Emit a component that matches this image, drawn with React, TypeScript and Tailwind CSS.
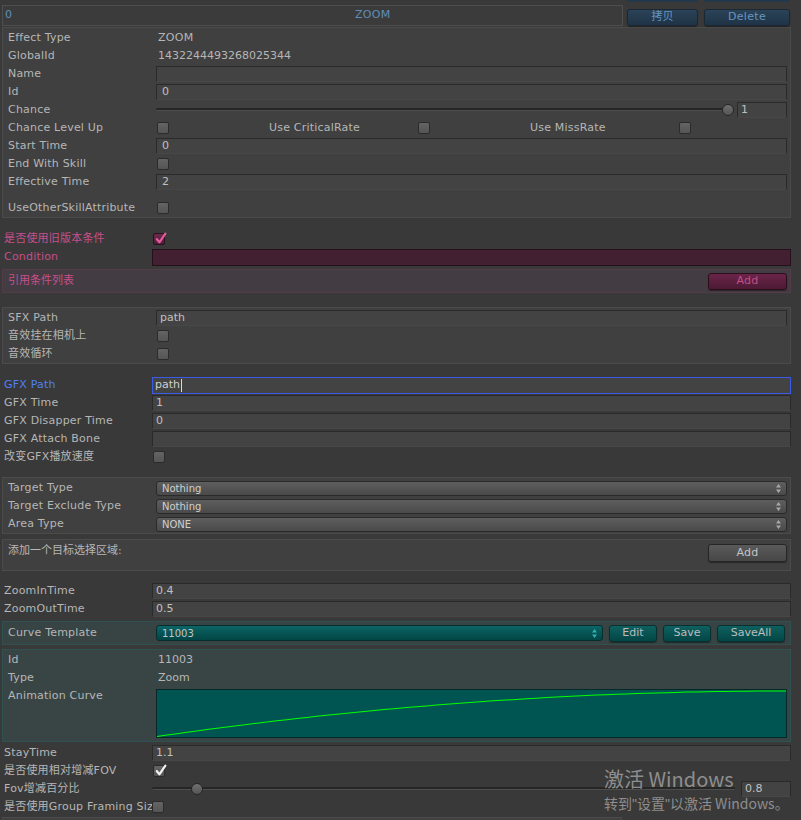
import React from "react"

type Kids = { children?: React.ReactNode }

function Check({ checked, tone = "gray" }: { checked?: boolean; tone?: "gray" | "pink" }) {
  const box =
    tone === "pink"
      ? "bg-linear-to-b from-[#6a2c4a] to-[#4f1f37] border-[#2a1020]"
      : "bg-linear-to-b from-[#646464] to-[#555555] border-[#2b2b2b]"
  return (
    <div className={`relative h-[12px] w-[12px] shrink-0 rounded-[2px] border ${box}`}>
      {checked && (
        <svg viewBox="0 0 12 12" className="absolute left-[0px] top-[-2px] h-[13px] w-[13px]">
          <path
            d="M2.5 6.5 L5 9.5 L10.5 1.5"
            fill="none"
            stroke={tone === "pink" ? "#e45c9e" : "#f2f2f2"}
            strokeWidth="2"
            strokeLinecap="round"
            strokeLinejoin="round"
          />
        </svg>
      )}
    </div>
  )
}

function Field({ value, pad = "pl-[3px]", extra = "" }: { value?: string; pad?: string; extra?: string }) {
  return (
    <div
      className={`h-[16px] min-w-0 flex-1 border border-[#2a2a2a] border-b-[#474747] bg-[#434343] leading-[14px] text-[#c0c0c0] ${pad} ${extra}`}
    >
      {value}
    </div>
  )
}

function Row({ label, inset, labelClass = "", children }: { label: string; inset?: boolean; labelClass?: string } & Kids) {
  return (
    <div className="flex h-[18px] items-center">
      <div
        className={`${inset ? "w-[153px] pl-[5px]" : "w-[152px] pl-[4px]"} shrink-0 overflow-hidden whitespace-nowrap tracking-[0.2px] ${labelClass}`}
      >
        {label}
      </div>
      <div className="flex min-w-0 flex-1 items-center">{children}</div>
    </div>
  )
}

function Arrows({ color = "#a8a8a8" }: { color?: string }) {
  return (
    <svg viewBox="0 0 5 9" className="h-[9px] w-[5px] shrink-0">
      <path d="M2.5 0 L5 3.5 L0 3.5 Z M0 5.5 L5 5.5 L2.5 9 Z" fill={color} />
    </svg>
  )
}

function Dropdown({ value }: { value: string }) {
  return (
    <div className="flex h-[15px] flex-1 items-center justify-between rounded-[3px] border border-[#2a2a2a] bg-linear-to-b from-[#5e5e5e] to-[#4a4a4a] pl-[5px] pr-[5px] text-[10px] text-[#d0d0d0]">
      <span className="leading-[13px]">{value}</span>
      <Arrows />
    </div>
  )
}

function Slider({ thumb }: { thumb: string }) {
  return (
    <div className="relative h-[18px] min-w-0 flex-1">
      <div className="absolute left-0 right-0 top-[7px] h-[3px] rounded-full border-b border-[#4e4e4e] bg-[#262626]" />
      <div
        className={`absolute top-[3px] h-[12px] w-[12px] rounded-full border border-[#262626] bg-linear-to-b from-[#707070] to-[#555555] ${thumb}`}
      />
    </div>
  )
}

function TealBtn({ label, w }: { label: string; w: string }) {
  return (
    <div
      className={`flex h-[17px] ${w} shrink-0 items-center justify-center rounded-[3px] border border-[#073030] bg-linear-to-b from-[#0f6060] to-[#044646] text-[#bcbcbc] shadow-[0_1px_1px_rgba(0,0,0,0.4)]`}
    >
      {label}
    </div>
  )
}

// ease-out curve drawn in the teal area
const curvePts = Array.from({ length: 64 }, (_, i) => {
  const t = i / 63
  const x = t * 628
  const y = 46.5 - 45.5 * (1 - (1 - t) * (1 - t))
  return `${x.toFixed(1)},${y.toFixed(1)}`
}).join(" ")

export default function App() {
  return (
    <div className="relative h-[820px] w-[801px] overflow-hidden bg-[#393939] font-['DejaVu_Sans','Noto_Sans_CJK_SC',sans-serif] text-[11px] text-[#b6b6b6]">
      {/* bottoms of the button row above */}
      <div className="flex h-[4px]">
        <div className="ml-[627px] h-[2px] w-[71px] rounded-b-[2px] bg-[#23384a]" />
        <div className="ml-[6px] h-[2px] w-[86px] rounded-b-[2px] bg-[#23384a]" />
      </div>

      {/* header */}
      <div className="mt-[1px] flex h-[21px] items-end">
        <div className="ml-[2px] flex h-[21px] w-[621px] items-center border border-[#4e4e4e] bg-[#3b3b3b] pl-[2px] text-[#5f8fb9]">
          <span>0</span>
          <span className="ml-[343px] tracking-[0.3px]">ZOOM</span>
        </div>
        <div className="ml-[4px] flex h-[17px] w-[71px] items-center justify-center rounded-[3px] border border-[#1a2835] bg-linear-to-b from-[#2b4358] to-[#1f3345] text-[#6595c2] shadow-[0_1px_1px_rgba(0,0,0,0.4)]">
          拷贝
        </div>
        <div className="ml-[6px] flex h-[17px] w-[86px] items-center justify-center rounded-[3px] border border-[#1a2835] bg-linear-to-b from-[#2b4358] to-[#1f3345] tracking-[0.3px] text-[#6595c2] shadow-[0_1px_1px_rgba(0,0,0,0.4)]">
          Delete
        </div>
      </div>

      {/* main box */}
      <div className="ml-[2px] mt-[1px] w-[789px] border border-[#4b4b4b] bg-[#404040] pr-[3px] pt-[1px]">
        <Row inset label="Effect Type">
          <span className="pl-[2px] tracking-[0.3px]">ZOOM</span>
        </Row>
        <Row inset label="GlobalId">
          <span className="pl-[2px]">1432244493268025344</span>
        </Row>
        <Row inset label="Name">
          <Field pad="pl-[5px]" />
        </Row>
        <Row inset label="Id">
          <Field pad="pl-[5px]" value="0" />
        </Row>
        <Row inset label="Chance">
          <Slider thumb="left-[566px]" />
          <div className="ml-[4px] flex w-[50px]">
            <Field pad="pl-[3px]" value="1" />
          </div>
        </Row>
        <Row inset label="Chance Level Up">
          <div className="w-[113px] pl-[1px]">
            <Check />
          </div>
          <div className="w-[149px] tracking-[0.2px]">Use CriticalRate</div>
          <div className="w-[112px]">
            <Check />
          </div>
          <div className="w-[149px] tracking-[0.2px]">Use MissRate</div>
          <Check />
        </Row>
        <Row inset label="Start Time">
          <Field pad="pl-[5px]" value="0" />
        </Row>
        <Row inset label="End With Skill">
          <div className="pl-[1px]">
            <Check />
          </div>
        </Row>
        <Row inset label="Effective Time">
          <Field pad="pl-[5px]" value="2" />
        </Row>
        <div className="mt-[8px]">
          <Row inset label="UseOtherSkillAttribute">
            <div className="pl-[1px]">
              <Check />
            </div>
          </Row>
        </div>
      </div>

      {/* condition */}
      <div className="mt-[12px] pr-[10px] text-[#c64f8b]">
        <Row label="是否使用旧版本条件">
          <div className="pl-[1px]">
            <Check checked tone="pink" />
          </div>
        </Row>
        <Row label="Condition">
          <div className="h-[17px] flex-1 border border-[#26101b] bg-[#421f31]" />
        </Row>
      </div>
      <div className="ml-[2px] mt-[3px] flex h-[24px] w-[789px] items-center justify-between border border-[#513c48] bg-[#433c42] pl-[5px] pr-[3px] text-[#c64f8b]">
        <span>引用条件列表</span>
        <div className="flex h-[17px] w-[79px] items-center justify-center rounded-[3px] border border-[#2c0e1d] bg-linear-to-b from-[#6b2449] to-[#4c1a34] tracking-[0.3px] text-[#c44e88] shadow-[0_1px_1px_rgba(0,0,0,0.4)]">
          Add
        </div>
      </div>

      {/* sfx */}
      <div className="ml-[2px] mt-[14px] w-[789px] border border-[#4b4b4b] bg-[#404040] pr-[3px] pt-[1px]">
        <Row inset label="SFX Path">
          <Field pad="pl-[3px]" value="path" />
        </Row>
        <Row inset label="音效挂在相机上">
          <div className="pl-[1px]">
            <Check />
          </div>
        </Row>
        <Row inset label="音效循环">
          <div className="pl-[1px]">
            <Check />
          </div>
        </Row>
      </div>

      {/* gfx */}
      <div className="mt-[12px] pr-[10px]">
        <Row label="GFX Path" labelClass="text-[#4f7ff2]">
          <div className="flex h-[17px] flex-1 items-center border border-[#3a5be6] bg-[#434343] pl-[2px] text-[#d0d0d0]">
            <span>path</span>
            <span className="ml-[1px] h-[13px] w-[1px] bg-[#d8d8d8]" />
          </div>
        </Row>
        <Row label="GFX Time">
          <Field value="1" />
        </Row>
        <Row label="GFX Disapper Time">
          <Field value="0" />
        </Row>
        <Row label="GFX Attach Bone">
          <Field />
        </Row>
        <Row label="改变GFX播放速度">
          <div className="pl-[1px]">
            <Check />
          </div>
        </Row>
      </div>

      {/* targets */}
      <div className="ml-[2px] mt-[11px] w-[789px] border border-[#4b4b4b] bg-[#404040] pr-[3px] pt-[1px]">
        <Row inset label="Target Type">
          <Dropdown value="Nothing" />
        </Row>
        <Row inset label="Target Exclude Type">
          <Dropdown value="Nothing" />
        </Row>
        <Row inset label="Area Type">
          <Dropdown value="NONE" />
        </Row>
      </div>
      <div className="ml-[2px] mt-[5px] flex h-[32px] w-[789px] items-start justify-between border border-[#4b4b4b] bg-[#404040] pl-[5px] pr-[3px] pt-[4px]">
        <span className="leading-[14px]">添加一个目标选择区域:</span>
        <div className="flex h-[18px] w-[79px] items-center justify-center rounded-[3px] border border-[#262626] bg-linear-to-b from-[#5a5a5a] to-[#474747] tracking-[0.3px] text-[#c4c4c4] shadow-[0_1px_1px_rgba(0,0,0,0.4)]">
          Add
        </div>
      </div>

      {/* zoom */}
      <div className="mt-[11px] pr-[10px]">
        <Row label="ZoomInTime">
          <Field value="0.4" />
        </Row>
        <Row label="ZoomOutTime">
          <Field value="0.5" />
        </Row>
      </div>

      {/* curve template */}
      <div className="ml-[2px] mt-[3px] flex h-[24px] w-[789px] items-center border border-[#2f5151] bg-[#384444] pl-[5px] pr-[3px]">
        <div className="w-[148px] shrink-0 tracking-[0.2px]">Curve Template</div>
        <div className="flex h-[16px] w-[447px] items-center justify-between rounded-[3px] border border-[#062e2e] bg-linear-to-b from-[#0c6565] to-[#034545] pl-[5px] pr-[5px] text-[10px] text-[#c4c4c4]">
          <span>11003</span>
          <Arrows color="#2fb0b0" />
        </div>
        <div className="ml-[6px]">
          <TealBtn label="Edit" w="w-[48px]" />
        </div>
        <div className="ml-[6px]">
          <TealBtn label="Save" w="w-[48px]" />
        </div>
        <div className="ml-[6px]">
          <TealBtn label="SaveAll" w="w-[68px]" />
        </div>
      </div>
      <div className="ml-[2px] mt-[4px] w-[789px] border border-[#2f5151] bg-[#394545] pb-[3px] pr-[3px] pt-[1px]">
        <Row inset label="Id">
          <span className="pl-[2px]">11003</span>
        </Row>
        <Row inset label="Type">
          <span className="pl-[2px]">Zoom</span>
        </Row>
        <div className="flex">
          <div className="w-[153px] shrink-0 pl-[5px] leading-[18px] tracking-[0.2px]">Animation Curve</div>
          <div className="mt-[2px] h-[49px] flex-1 border border-[#062828] bg-[#005553]">
            <svg viewBox="0 0 628 47" className="block h-[47px] w-full" preserveAspectRatio="none">
              <polyline points={curvePts} fill="none" stroke="#00ff00" strokeWidth="1" />
            </svg>
          </div>
        </div>
      </div>

      {/* fov */}
      <div className="mt-[2px] pr-[10px]">
        <Row label="StayTime">
          <Field value="1.1" />
        </Row>
        <Row label="是否使用相对增减FOV">
          <div className="pl-[1px]">
            <Check checked />
          </div>
        </Row>
        <Row label="Fov增减百分比">
          <Slider thumb="left-[39px]" />
          <div className="ml-[6px] flex w-[50px]">
            <Field value="0.8" />
          </div>
        </Row>
        <Row label="是否使用Group Framing Size">
          <Check />
        </Row>
      </div>
      <div className="ml-[2px] mt-[1px] h-[10px] w-[620px] border border-[#4b4b4b] bg-[#404040]" />

      {/* windows activation watermark */}
      <div className="pointer-events-none absolute left-[604px] top-[765px] font-['Noto_Sans_CJK_SC',sans-serif] text-[#8e8e8e]">
        <div className="text-[20px] leading-[28px]">激活 Windows</div>
        <div className="whitespace-nowrap text-[14px] leading-[20px]">
          转到<span className="font-['Liberation_Sans']">"</span>设置<span className="font-['Liberation_Sans']">"</span>以激活 Windows。
        </div>
      </div>
    </div>
  )
}
